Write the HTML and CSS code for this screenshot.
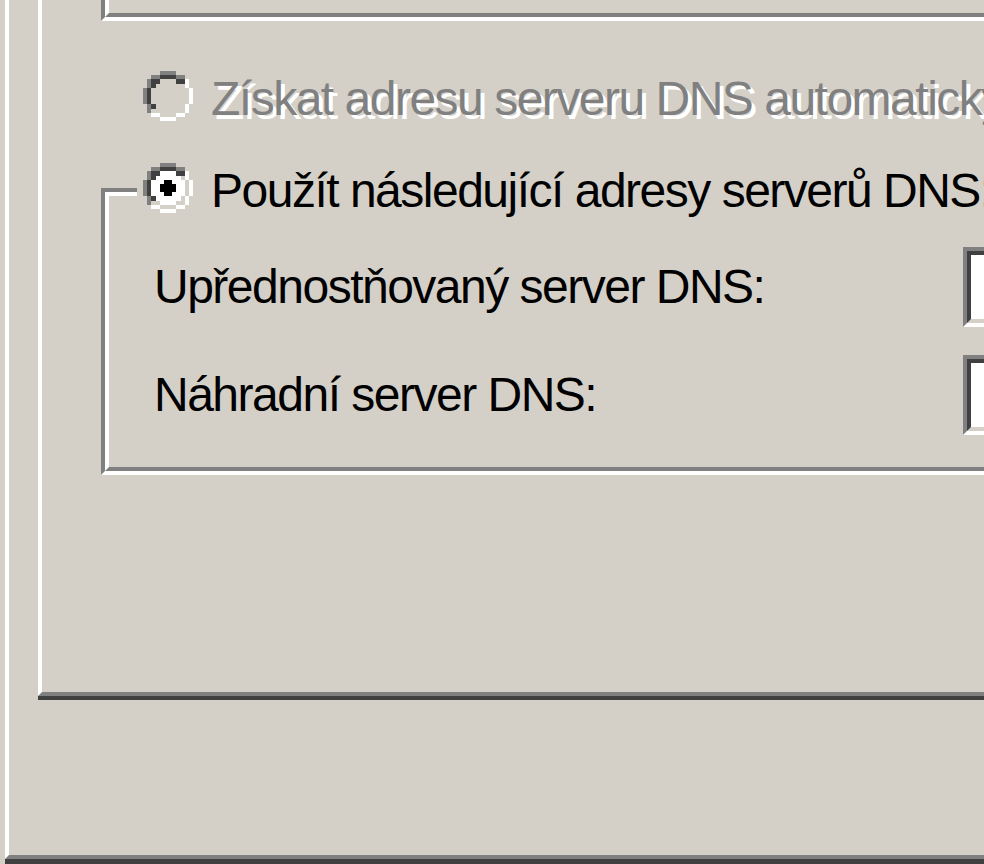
FILE: index.html
```html
<!DOCTYPE html>
<html lang="cs">
<head>
  <meta charset="UTF-8">
  <title>Vlastnosti protokolu TCP/IP</title>
  <link rel="stylesheet" href="styles.css">
</head>
<body>

<div class="window">
  <div class="window-in">

    <div class="panel">
      <div class="panel-in">

        <!-- bottom edge of the IP address group above -->
        <div class="prev-group">
          <div class="prev-group-in"></div>
        </div>

        <div class="radio-row disabled">
          <svg class="radio" viewBox="0 0 12 12" width="50" height="50">
            <path fill="#808080" d="M4 0h4v1H4z M2 1h2v1H2z M8 1h2v1H8z M1 2h1v2H1z M0 4h1v4H0z M1 8h1v2H1z"/>
            <path fill="#ffffff" d="M10 2h1v2h-1z M11 4h1v4h-1z M10 8h1v2h-1z M2 10h2v1H2z M8 10h2v1H8z M4 11h4v1H4z"/>
            <path fill="#404040" d="M4 1h4v1H4z M2 2h2v1H2z M8 2h2v1H8z M2 3h1v1H2z M1 4h1v4H1z M2 8h1v1H2z"/>
          </svg>
          <span class="radio-label">Získat adresu serveru DNS automaticky</span>
        </div>

        <div class="group">
          <div class="group-in">
            <div class="legend">
              <svg class="radio" viewBox="0 0 12 12" width="50" height="50">
                <path fill="#808080" d="M4 0h4v1H4z M2 1h2v1H2z M8 1h2v1H8z M1 2h1v2H1z M0 4h1v4H0z M1 8h1v2H1z"/>
                <path fill="#ffffff" d="M10 2h1v2h-1z M11 4h1v4h-1z M10 8h1v2h-1z M2 10h2v1H2z M8 10h2v1H8z M4 11h4v1H4z"/>
                <path fill="#404040" d="M4 1h4v1H4z M2 2h2v1H2z M8 2h2v1H8z M2 3h1v1H2z M1 4h1v4H1z M2 8h1v1H2z"/>
                <path fill="#d4d0c8" d="M9 3h1v1H9z M10 4h1v4h-1z M9 8h1v1H9z M2 9h2v1H2z M8 9h2v1H8z M4 10h4v1H4z"/>
                <path fill="#ffffff" d="M4 2h4v1H4z M3 3h6v1H3z M2 4h8v4H2z M3 8h6v1H3z M4 9h4v1H4z"/>
                <path fill="#000000" d="M5 4h2v1H5z M4 5h4v2H4z M5 7h2v1H5z"/>
              </svg>
              <span class="radio-label">Použít následující adresy serverů DNS:</span>
            </div>

            <div class="field-row first">
              <label class="field-label">Upřednostňovaný server DNS:</label>
              <div class="field"><div class="field-in"></div></div>
            </div>

            <div class="field-row">
              <label class="field-label">Náhradní server DNS:</label>
              <div class="field"><div class="field-in"></div></div>
            </div>
          </div>
        </div>

      </div>
    </div>

  </div>
</div>

</body>
</html>
```

FILE: styles.css
```css
html, body {
  margin: 0;
  width: 984px;
  height: 864px;
  overflow: hidden;
}

body {
  background: #d4d0c8;
  font-family: "Liberation Sans", Arial, sans-serif;
  font-size: 48px;
  letter-spacing: -1.5px;
  color: #000;
}

/* outer dialog frame */
.window {
  margin-left: 5px;
  border-bottom: 5px solid #404040;
}

.window-in {
  height: 855px;
  border-left: 4px solid #fff;
  border-bottom: 4px solid #808080;
}

/* tab page */
.panel {
  margin-left: 29px;
  border-bottom: 4px solid #404040;
}

.panel-in {
  height: 692px;
  border-left: 4px solid #fff;
  border-bottom: 4px solid #808080;
  overflow: hidden;
}

/* etched group box edges: gray line + white line */
.prev-group {
  margin-left: 59px;
  width: 1000px;
  border-left: 4px solid #808080;
  border-bottom: 4px solid #fff;
}

.prev-group-in {
  height: 13px;
  border-left: 4px solid #fff;
  border-bottom: 4px solid #808080;
}

.radio-row,
.legend {
  display: flex;
  align-items: center;
  height: 50px;
  white-space: nowrap;
}

.radio-row {
  margin-top: 50px;
  margin-left: 101px;
}

.radio {
  flex: none;
  shape-rendering: crispEdges;
}

.radio-label {
  margin-left: 18px;
  padding-top: 6px;
  line-height: 56px;
}

.disabled .radio-label {
  color: #808080;
  text-shadow: 4px 4px 0 #fff;
}

.group {
  margin-top: 67px;
  margin-left: 59px;
  width: 1100px;
  border-top: 4px solid #808080;
  border-left: 4px solid #808080;
  border-bottom: 4px solid #fff;
}

.group-in {
  padding-bottom: 32px;
  border-top: 4px solid #fff;
  border-left: 4px solid #fff;
  border-bottom: 4px solid #808080;
}

.legend {
  width: max-content;
  margin-top: -33px;
  margin-left: 28px;
  padding: 0 6px;
  background: #d4d0c8;
}

.field-row {
  display: flex;
  align-items: center;
  margin-top: 28px;
  padding-left: 45px;
}

.field-row.first {
  margin-top: 34px;
}

.field-label {
  flex: none;
  width: 809px;
  line-height: 50px;
  white-space: nowrap;
}

.field {
  flex: none;
  width: 200px;
  border-top: 4px solid #808080;
  border-left: 4px solid #808080;
  border-bottom: 4px solid #fff;
}

.field-in {
  height: 64px;
  background: #fff;
  border-top: 4px solid #404040;
  border-left: 4px solid #404040;
  border-bottom: 4px solid #d4d0c8;
}
```
